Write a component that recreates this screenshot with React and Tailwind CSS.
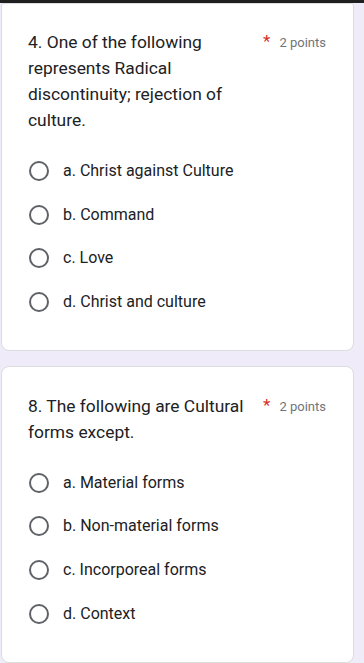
import React from "react";

const font = { fontFamily: "Roboto, 'Noto Sans', Arial, sans-serif" };

function Option({ label }) {
  return (
    <div className="flex items-center h-[43.7px]">
      <div className="ml-[1px] w-[20px] h-[20px] rounded-full border-2 border-[#5f6368] shrink-0" />
      <span className="ml-[14px] text-[16px] leading-[20px] text-[#202124]">{label}</span>
    </div>
  );
}

function Question({ title, options, cardClass }) {
  return (
    <div className={"bg-white border border-[#dadce0] pl-[26px] pr-[27px] pb-[26px] " + cardClass}>
      <div className="flex items-start">
        <div className="flex-1 pr-[4px] text-[17.4px] leading-[26px] text-[#202124]">{title}</div>
        <span className="text-[#d93025] text-[17px] leading-[24px] mr-[9px]">*</span>
        <span className="text-[13px] leading-[26px] text-[#70757a] mt-[1px]">2 points</span>
      </div>
      <div className="mt-[16px] flex flex-col">
        {options.map((o) => (
          <Option key={o} label={o} />
        ))}
      </div>
    </div>
  );
}

export default function App() {
  return (
    <div className="w-[364px] h-[663px] bg-[#f0ebf8] overflow-hidden" style={font}>
      <div className="h-[3px] bg-[#1f1f1f]" />
      <div className="pl-[1px] pr-[10px] flex flex-col gap-[15px]">
        <Question
          cardClass="rounded-b-[8px] rounded-t-[3px] pt-[25px]"
          title="4. One of the following represents Radical discontinuity; rejection of culture."
          options={["a. Christ against Culture", "b. Command", "c. Love", "d. Christ and culture"]}
        />
        <Question
          cardClass="rounded-[8px] pt-[26px]"
          title="8. The following are Cultural forms except."
          options={["a. Material forms", "b. Non-material forms", "c. Incorporeal forms", "d. Context"]}
        />
      </div>
    </div>
  );
}
